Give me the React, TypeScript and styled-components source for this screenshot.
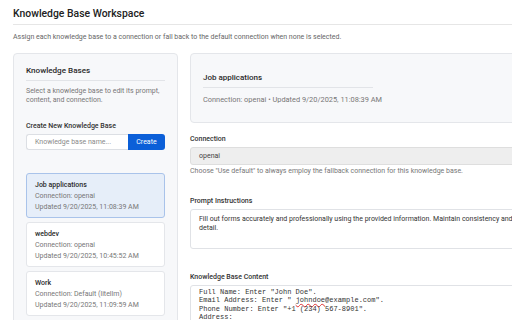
import React from 'react';
import styled, { createGlobalStyle } from 'styled-components';

const GlobalStyle = createGlobalStyle`
  html, body {
    margin: 0;
    padding: 0;
    background: #ffffff;
    overflow: hidden;
  }
  body {
    font-family: Roboto, "Liberation Sans", sans-serif;
    color: #222;
  }
`;

const Page = styled.div`
  width: 560px;
  padding: 6px 13px 0 13px;
`;

const Title = styled.h1`
  margin: 0;
  padding: 2px 0 4px;
  font-size: 10.4px;
  line-height: 12px;
  font-weight: 500;
  border-bottom: 1px solid #e6e6e6;
`;

const Subtitle = styled.p`
  margin: 8px 0 12px;
  font-size: 7px;
  line-height: 8px;
  color: #666;
`;

const Layout = styled.div`
  display: grid;
  grid-template-columns: 165px 1fr;
  gap: 12px;
  align-items: start;
`;

const Sidebar = styled.aside`
  background: #f7f8fa;
  border: 1px solid #e4e6ea;
  border-radius: 4px;
  padding: 11px 12px 20px;
  min-height: 300px;
`;

const PanelTitle = styled.h2`
  margin: 0;
  padding: 0 0 5px;
  font-size: 8.1px;
  font-weight: 500;
  color: #2a2a2a;
  border-bottom: 1px solid #e2e4e8;
`;

const Hint = styled.p`
  margin: 6px 0 18px;
  font-size: 7px;
  line-height: 8.5px;
  color: #777;
`;

const Label = styled.div`
  font-size: 7px;
  font-weight: 500;
  color: #333;
  margin-bottom: 4px;
`;

const CreateRow = styled.div`
  display: flex;
  height: 16px;
  margin-bottom: 23px;
`;

const NameInput = styled.div`
  flex: 1;
  display: flex;
  align-items: center;
  padding-left: 8px;
  background: #fff;
  border: 1px solid #dcdfe4;
  border-right: none;
  border-radius: 3px 0 0 3px;
  font-size: 7px;
  color: #8a8a8a;
`;

const CreateButton = styled.button`
  width: 37px;
  border: none;
  border-radius: 0 3px 3px 0;
  background: #0b5fd8;
  color: #fff;
  font-family: inherit;
  font-size: 7px;
  padding: 0;
`;

const List = styled.div`
  display: flex;
  flex-direction: column;
  gap: 4px;
`;

const Item = styled.div<{ $active?: boolean }>`
  height: 45px;
  box-sizing: border-box;
  padding: 6px 8px;
  border-radius: 3px;
  border: 1px solid ${({ $active }) => ($active ? '#a9c3ea' : '#e4e6ea')};
  background: ${({ $active }) => ($active ? '#e6eef9' : '#ffffff')};
`;

const ItemName = styled.div`
  font-size: 7px;
  line-height: 10px;
  font-weight: 500;
  color: #2a2a2a;
  margin-bottom: 1px;
`;

const ItemMeta = styled.div`
  font-size: 7px;
  line-height: 10.5px;
  color: #777;
`;

const Main = styled.main`
  display: flex;
  flex-direction: column;
`;

const HeaderCard = styled.div`
  background: #f7f8fa;
  border: 1px solid #e4e6ea;
  border-radius: 4px;
  padding: 19px 12px 18px;
  margin-bottom: 12px;
`;

const HeaderTitle = styled.div`
  width: 170px;
  font-size: 8px;
  font-weight: 500;
  color: #2a2a2a;
  padding-bottom: 5px;
  border-bottom: 1px solid #e2e4e8;
  margin-bottom: 7px;
`;

const HeaderMeta = styled.div`
  font-size: 7.4px;
  color: #777;
`;

const Field = styled.div<{ $gap?: number }>`
  margin-bottom: ${({ $gap }) => $gap ?? 20}px;
`;

const FieldLabel = styled.div`
  font-size: 7px;
  font-weight: 500;
  color: #333;
  margin-bottom: 4px;
`;

const SelectBox = styled.div`
  height: 16px;
  display: flex;
  align-items: center;
  padding-left: 8px;
  background: #eeeeee;
  border: 1px solid #dedede;
  border-radius: 3px;
  font-size: 7px;
  color: #444;
`;

const HelpText = styled.div`
  margin-top: 2px;
  font-size: 7px;
  color: #777;
`;

const TextBox = styled.div`
  height: 40px;
  box-sizing: border-box;
  padding: 5px 8px;
  background: #fff;
  border: 1px solid #e0e2e6;
  border-radius: 3px;
  font-size: 7px;
  line-height: 8.5px;
  color: #333;
`;

const CodeBox = styled.div`
  min-height: 60px;
  padding: 2px 8px;
  background: #fff;
  border: 1px solid #e0e2e6;
  border-radius: 3px;
  font-family: "Liberation Mono", "DejaVu Sans Mono", monospace;
  font-size: 7px;
  line-height: 8.3px;
  color: #333;
  white-space: pre;
`;

const Misspelled = styled.span`
  text-decoration: underline wavy #e03030;
  text-decoration-thickness: 0.5px;
  text-underline-offset: 1px;
  text-decoration-skip-ink: none;
`;

const bases = [
  { name: 'Job applications', conn: 'openai', updated: '9/20/2025, 11:08:39 AM' },
  { name: 'webdev', conn: 'openai', updated: '9/20/2025, 10:45:52 AM' },
  { name: 'Work', conn: 'Default (litellm)', updated: '9/20/2025, 11:09:59 AM' },
];

const App = () => {
  return (
    <>
      <GlobalStyle />
      <Page>
        <Title>Knowledge Base Workspace</Title>
        <Subtitle>
          Assign each knowledge base to a connection or fall back to the default connection when none is selected.
        </Subtitle>
        <Layout>
          <Sidebar>
            <PanelTitle>Knowledge Bases</PanelTitle>
            <Hint>Select a knowledge base to edit its prompt, content, and connection.</Hint>
            <Label>Create New Knowledge Base</Label>
            <CreateRow>
              <NameInput>Knowledge base name...</NameInput>
              <CreateButton>Create</CreateButton>
            </CreateRow>
            <List>
              {bases.map((b, i) => (
                <Item key={b.name} $active={i === 0}>
                  <ItemName>{b.name}</ItemName>
                  <ItemMeta>Connection: {b.conn}</ItemMeta>
                  <ItemMeta>Updated {b.updated}</ItemMeta>
                </Item>
              ))}
            </List>
          </Sidebar>
          <Main>
            <HeaderCard>
              <HeaderTitle>Job applications</HeaderTitle>
              <HeaderMeta>Connection: openai • Updated 9/20/2025, 11:08:39 AM</HeaderMeta>
            </HeaderCard>
            <Field $gap={22}>
              <FieldLabel>Connection</FieldLabel>
              <SelectBox>openai</SelectBox>
              <HelpText>Choose "Use default" to always employ the fallback connection for this knowledge base.</HelpText>
            </Field>
            <Field $gap={24}>
              <FieldLabel>Prompt Instructions</FieldLabel>
              <TextBox>
                Fill out forms accurately and professionally using the provided information. Maintain consistency and
                attention to detail.
              </TextBox>
            </Field>
            <Field>
              <FieldLabel>Knowledge Base Content</FieldLabel>
              <CodeBox>
                {'Full Name: Enter "John Doe".\nEmail Address: Enter " '}
                <Misspelled>johndoe</Misspelled>
                {'@example.com".\nPhone Number: Enter "+1 (234) 567-8901".\nAddress:'}
              </CodeBox>
            </Field>
          </Main>
        </Layout>
      </Page>
    </>
  );
};

export default App;
